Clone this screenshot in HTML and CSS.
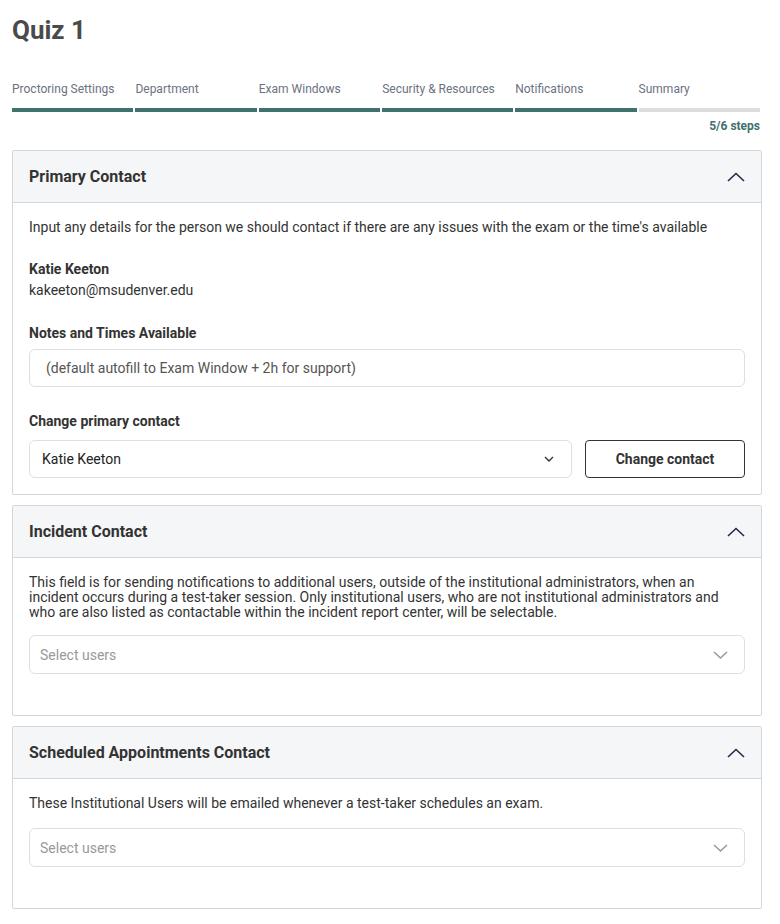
FILE: index.html
```html
<!DOCTYPE html>
<html lang="en">
<head>
    <meta charset="UTF-8">
    <meta name="viewport" content="width=device-width, initial-scale=1.0">
    <title>Quiz 1</title>
    <link rel="stylesheet" href="styles.css">
</head>
<body>
    <div class="page">
        <h1 class="page-title">Quiz 1</h1>

        <!-- 步骤进度 -->
        <div class="steps">
            <div class="step done"><span>Proctoring Settings</span><div class="bar"></div></div>
            <div class="step done"><span>Department</span><div class="bar"></div></div>
            <div class="step done"><span>Exam Windows</span><div class="bar"></div></div>
            <div class="step done"><span>Security &amp; Resources</span><div class="bar"></div></div>
            <div class="step done"><span>Notifications</span><div class="bar"></div></div>
            <div class="step"><span>Summary</span><div class="bar"></div></div>
        </div>
        <div class="steps-count">5/6 steps</div>

        <!-- Primary Contact -->
        <div class="card">
            <div class="card-header">
                <h2>Primary Contact</h2>
                <svg class="chevron-up" width="18" height="10" viewBox="0 0 18 10"><path d="M1 9 L9 1.5 L17 9" fill="none" stroke="#1f2b4d" stroke-width="1.6"/></svg>
            </div>
            <div class="card-body">
                <p class="intro">Input any details for the person we should contact if there are any issues with the exam or the time's available</p>
                <div class="contact">
                    <div class="contact-name">Katie Keeton</div>
                    <div>kakeeton@msudenver.edu</div>
                </div>
                <div class="field">
                    <label>Notes and Times Available</label>
                    <div class="input notes">(default autofill to Exam Window + 2h for support)</div>
                </div>
                <div class="field">
                    <label class="label-wide">Change primary contact</label>
                    <div class="row">
                        <div class="input select">
                            <span>Katie Keeton</span>
                            <svg width="10" height="6" viewBox="0 0 10 6"><path d="M1 1 L5 5 L9 1" fill="none" stroke="#333" stroke-width="1.4"/></svg>
                        </div>
                        <button class="btn-outline">Change contact</button>
                    </div>
                </div>
            </div>
        </div>

        <!-- Incident Contact -->
        <div class="card">
            <div class="card-header">
                <h2>Incident Contact</h2>
                <svg class="chevron-up" width="18" height="10" viewBox="0 0 18 10"><path d="M1 9 L9 1.5 L17 9" fill="none" stroke="#1f2b4d" stroke-width="1.6"/></svg>
            </div>
            <div class="card-body">
                <p class="intro tight">This field is for sending notifications to additional users, outside of the institutional administrators, when an incident occurs during a test-taker session. Only institutional users, who are not institutional administrators and who are also listed as contactable within the incident report center, will be selectable.</p>
                <div class="input select users">
                    <span class="placeholder">Select users</span>
                    <svg width="15" height="8" viewBox="0 0 15 8"><path d="M1 1 L7.5 7 L14 1" fill="none" stroke="#999" stroke-width="1.5"/></svg>
                </div>
            </div>
        </div>

        <!-- Scheduled Appointments Contact -->
        <div class="card">
            <div class="card-header">
                <h2>Scheduled Appointments Contact</h2>
                <svg class="chevron-up" width="18" height="10" viewBox="0 0 18 10"><path d="M1 9 L9 1.5 L17 9" fill="none" stroke="#1f2b4d" stroke-width="1.6"/></svg>
            </div>
            <div class="card-body">
                <p class="intro">These Institutional Users will be emailed whenever a test-taker schedules an exam.</p>
                <div class="input select users">
                    <span class="placeholder">Select users</span>
                    <svg width="15" height="8" viewBox="0 0 15 8"><path d="M1 1 L7.5 7 L14 1" fill="none" stroke="#999" stroke-width="1.5"/></svg>
                </div>
            </div>
        </div>
    </div>
</body>
</html>
```

FILE: styles.css
```css
body {
    margin: 0;
    padding: 0;
    font-family: Roboto, "Liberation Sans", sans-serif;
    font-size: 14px;
    color: #333;
    background: #fff;
}
.page {
    padding: 14px 20px 16px 12px;
}
.page-title {
    margin: 0;
    font-size: 26px;
    line-height: 32px;
    font-weight: 700;
    color: #4a4a4a;
}
.steps {
    display: grid;
    grid-template-columns: 1fr 1fr 1fr 131px 1fr 1fr;
    gap: 2px;
    margin-top: 36px;
}
.step span {
    display: block;
    font-size: 12px;
    line-height: 14px;
    color: #6b7280;
    white-space: nowrap;
}
.step .bar {
    height: 4px;
    margin-top: 12px;
    background: #dcdcdc;
}
.step.done .bar {
    background: #3f716d;
}
.steps-count {
    text-align: right;
    font-size: 12px;
    line-height: 14px;
    font-weight: 700;
    color: #3f716d;
    margin-top: 7px;
}
.card {
    border: 1px solid #d3d6db;
    border-radius: 2px;
    margin-top: 17px;
    margin-right: -2px;
}
.card + .card {
    margin-top: 10px;
}
.card-header {
    display: flex;
    align-items: center;
    justify-content: space-between;
    height: 51px;
    padding: 0 16px;
    background: #f5f6f8;
    border-bottom: 1px solid #d3d6db;
}
.card-header h2 {
    margin: 0;
    font-size: 16px;
    font-weight: 700;
    color: #333;
}
.card-body {
    padding: 16px 16px 16px;
}
.intro {
    margin: 0 0 16px;
    line-height: 17px;
}
.intro.tight {
    line-height: 15px;
    margin-top: 1px;
    margin-bottom: 15px;
}
.contact {
    line-height: 21px;
    margin-top: 23px;
    margin-bottom: 24px;
}
.contact-name {
    font-weight: 700;
}
.field {
    margin-bottom: 26px;
}
.field:last-child {
    margin-bottom: 0;
}
.field label {
    display: block;
    font-weight: 700;
    line-height: 17px;
    margin-bottom: 7px;
}
.field .label-wide {
    margin-bottom: 10px;
}
.input {
    box-sizing: border-box;
    height: 38px;
    border: 1px solid #dcdfe3;
    border-radius: 6px;
    background: #fff;
    display: flex;
    align-items: center;
}
.notes {
    padding-left: 16px;
    color: #555;
}
.row {
    display: flex;
    gap: 13px;
}
.select {
    flex: 1;
    justify-content: space-between;
    padding: 0 17px 0 12px;
    color: #222;
}
.select.users {
    height: 39px;
    padding: 0 16px 0 10px;
    margin-bottom: 25px;
}
.placeholder {
    color: #999;
}
.btn-outline {
    width: 160px;
    height: 38px;
    border: 1px solid #333;
    border-radius: 4px;
    background: #fff;
    font-family: inherit;
    font-size: 14px;
    font-weight: 700;
    color: #333;
}
```
